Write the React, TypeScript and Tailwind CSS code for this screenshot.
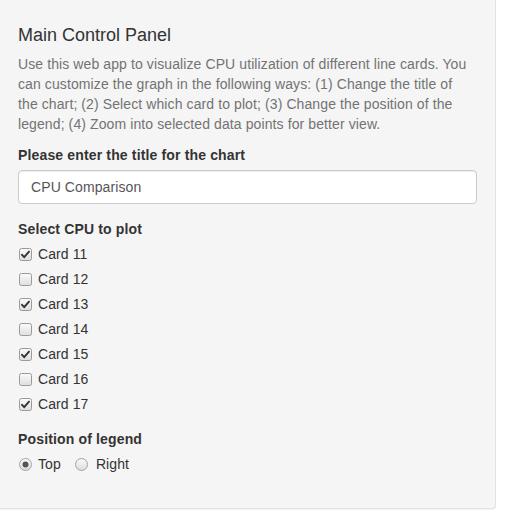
import React from "react";

const cards = [
  { label: "Card 11", checked: true },
  { label: "Card 12", checked: false },
  { label: "Card 13", checked: true },
  { label: "Card 14", checked: false },
  { label: "Card 15", checked: true },
  { label: "Card 16", checked: false },
  { label: "Card 17", checked: true },
];

function CheckBox({ checked }: { checked: boolean }) {
  return (
    <svg width="13" height="13" viewBox="0 0 13 13" className="shrink-0">
      <defs>
        <linearGradient id="cbg" x1="0" y1="0" x2="0" y2="1">
          <stop offset="0" stopColor="#fbfbfb" />
          <stop offset="1" stopColor="#dedede" />
        </linearGradient>
      </defs>
      <rect x="0.5" y="0.5" width="12" height="12" rx="2" fill="url(#cbg)" stroke="#9a9a9a" />
      {checked && (
        <path d="M3 6.8 L5.2 9.2 L10 3.6" fill="none" stroke="#333" strokeWidth="1.9" strokeLinecap="round" strokeLinejoin="round" />
      )}
    </svg>
  );
}

function Radio({ checked }: { checked: boolean }) {
  return (
    <svg width="13" height="13" viewBox="0 0 13 13" className="shrink-0">
      <defs>
        <linearGradient id="rbg" x1="0" y1="0" x2="0" y2="1">
          <stop offset="0" stopColor="#fbfbfb" />
          <stop offset="1" stopColor="#dcdcdc" />
        </linearGradient>
      </defs>
      <circle cx="6.5" cy="6.5" r="6" fill="url(#rbg)" stroke="#a3a3a3" />
      {checked && <circle cx="6.5" cy="6.5" r="3" fill="#555" />}
    </svg>
  );
}

export default function App() {
  return (
    <div
      className="w-[505px] h-[525px] bg-white text-[14px] text-[#333] overflow-hidden"
      style={{ fontFamily: '"Liberation Sans", Arial, sans-serif' }}
    >
      <div className="w-[496px] h-[509px] bg-[#f5f5f5] border-r border-b border-[#e3e3e3] rounded-br-[4px] shadow-[0_1px_1px_rgba(0,0,0,0.05)] pl-[18px] pr-[18px] pt-[25px]">
        <h4 className="text-[18px] leading-[20px] font-normal text-[#333]">Main Control Panel</h4>
        <p className="mt-[9px] w-[455px] leading-[20px] text-[#737373] tracking-[0.1px]">
          Use this web app to visualize CPU utilization of different line cards. You can customize the graph in the following ways: (1) Change the title of the chart; (2) Select which card to plot; (3) Change the position of the legend; (4) Zoom into selected data points for better view.
        </p>

        <div className="mt-[11px]">
          <label className="block font-bold leading-[20px] tracking-[0.15px]">Please enter the title for the chart</label>
          <div className="mt-[5px] h-[34px] w-[459px] bg-white border border-[#cccccc] rounded-[4px] shadow-[inset_0_1px_1px_rgba(0,0,0,0.075)] pl-[12px] flex items-center text-[#555] tracking-[0.1px]">
            CPU Comparison
          </div>
        </div>

        <div className="mt-[15px]">
          <label className="block font-bold leading-[20px] tracking-[0.15px]">Select CPU to plot</label>
          <div className="mt-[5px] flex flex-col gap-[5px]">
            {cards.map((c) => (
              <div key={c.label} className="flex items-center h-[20px] pl-[1px]">
                <CheckBox checked={c.checked} />
                <span className="ml-[6px] leading-[20px] tracking-[0.1px]">{c.label}</span>
              </div>
            ))}
          </div>
        </div>

        <div className="mt-[15px]">
          <label className="block font-bold leading-[20px] tracking-[0.15px]">Position of legend</label>
          <div className="mt-[5px] flex items-center h-[20px] pl-[1px] tracking-[0.1px]">
            <Radio checked />
            <span className="ml-[6px]">Top</span>
            <span className="ml-[14px] flex">
              <Radio checked={false} />
            </span>
            <span className="ml-[8px]">Right</span>
          </div>
        </div>
      </div>
    </div>
  );
}
